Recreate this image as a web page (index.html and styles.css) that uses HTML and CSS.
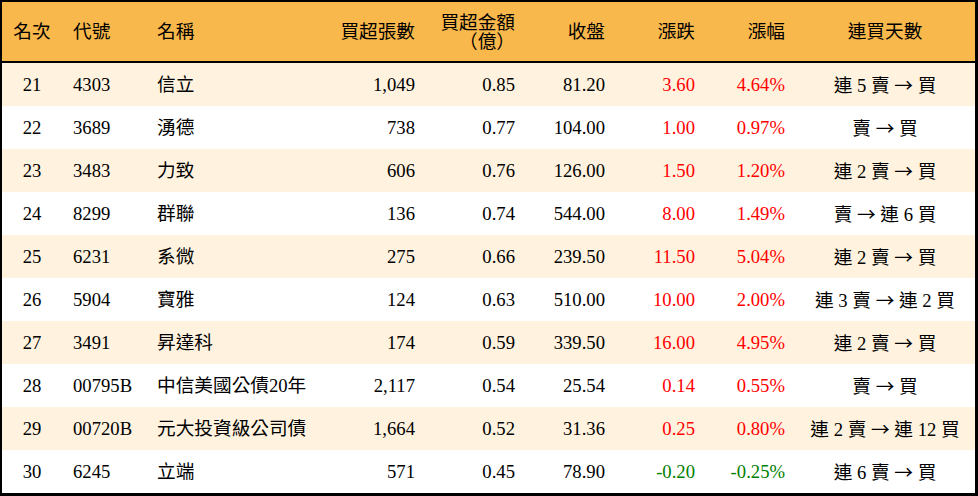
FILE: index.html
```html
<!DOCTYPE html>
<html lang="zh-Hant">
<head>
<meta charset="utf-8">
<title>買超排行</title>
<link rel="stylesheet" href="styles.css">
</head>
<body>
<table class="rank">
  <colgroup>
    <col class="c-rank"><col class="c-code"><col class="c-name"><col class="c-vol"><col class="c-amt"><col class="c-close"><col class="c-chg"><col class="c-pct"><col class="c-days">
  </colgroup>
  <thead>
    <tr>
      <th class="ctr">名次</th>
      <th class="lft code">代號</th>
      <th class="lft">名稱</th>
      <th class="rgt">買超張數</th>
      <th class="rgt two"><span class="ln">買超金額</span><span class="ln">（億）</span></th>
      <th class="rgt">收盤</th>
      <th class="rgt">漲跌</th>
      <th class="rgt">漲幅</th>
      <th class="ctr">連買天數</th>
    </tr>
  </thead>
  <tbody>
    <tr class="alt"><td class="ctr">21</td><td class="lft code">4303</td><td class="lft">信立</td><td class="rgt">1,049</td><td class="rgt">0.85</td><td class="rgt">81.20</td><td class="rgt up">3.60</td><td class="rgt up">4.64%</td><td class="ctr">連 5 賣 <span class="arr">→</span> 買</td></tr>
    <tr><td class="ctr">22</td><td class="lft code">3689</td><td class="lft">湧德</td><td class="rgt">738</td><td class="rgt">0.77</td><td class="rgt">104.00</td><td class="rgt up">1.00</td><td class="rgt up">0.97%</td><td class="ctr">賣 <span class="arr">→</span> 買</td></tr>
    <tr class="alt"><td class="ctr">23</td><td class="lft code">3483</td><td class="lft">力致</td><td class="rgt">606</td><td class="rgt">0.76</td><td class="rgt">126.00</td><td class="rgt up">1.50</td><td class="rgt up">1.20%</td><td class="ctr">連 2 賣 <span class="arr">→</span> 買</td></tr>
    <tr><td class="ctr">24</td><td class="lft code">8299</td><td class="lft">群聯</td><td class="rgt">136</td><td class="rgt">0.74</td><td class="rgt">544.00</td><td class="rgt up">8.00</td><td class="rgt up">1.49%</td><td class="ctr">賣 <span class="arr">→</span> 連 6 買</td></tr>
    <tr class="alt"><td class="ctr">25</td><td class="lft code">6231</td><td class="lft">系微</td><td class="rgt">275</td><td class="rgt">0.66</td><td class="rgt">239.50</td><td class="rgt up">11.50</td><td class="rgt up">5.04%</td><td class="ctr">連 2 賣 <span class="arr">→</span> 買</td></tr>
    <tr><td class="ctr">26</td><td class="lft code">5904</td><td class="lft">寶雅</td><td class="rgt">124</td><td class="rgt">0.63</td><td class="rgt">510.00</td><td class="rgt up">10.00</td><td class="rgt up">2.00%</td><td class="ctr">連 3 賣 <span class="arr">→</span> 連 2 買</td></tr>
    <tr class="alt"><td class="ctr">27</td><td class="lft code">3491</td><td class="lft">昇達科</td><td class="rgt">174</td><td class="rgt">0.59</td><td class="rgt">339.50</td><td class="rgt up">16.00</td><td class="rgt up">4.95%</td><td class="ctr">連 2 賣 <span class="arr">→</span> 買</td></tr>
    <tr><td class="ctr">28</td><td class="lft code">00795B</td><td class="lft">中信美國公債20年</td><td class="rgt">2,117</td><td class="rgt">0.54</td><td class="rgt">25.54</td><td class="rgt up">0.14</td><td class="rgt up">0.55%</td><td class="ctr">賣 <span class="arr">→</span> 買</td></tr>
    <tr class="alt"><td class="ctr">29</td><td class="lft code">00720B</td><td class="lft">元大投資級公司債</td><td class="rgt">1,664</td><td class="rgt">0.52</td><td class="rgt">31.36</td><td class="rgt up">0.25</td><td class="rgt up">0.80%</td><td class="ctr">連 2 賣 <span class="arr">→</span> 連 12 買</td></tr>
    <tr><td class="ctr">30</td><td class="lft code">6245</td><td class="lft">立端</td><td class="rgt">571</td><td class="rgt">0.45</td><td class="rgt">78.90</td><td class="rgt down">-0.20</td><td class="rgt down">-0.25%</td><td class="ctr">連 6 賣 <span class="arr">→</span> 買</td></tr>
  </tbody>
</table>
</body>
</html>
```
FILE: styles.css
```css
html, body {
  margin: 0;
  padding: 0;
  background: #ffffff;
}

.rank {
  width: 978px;
  height: 496px;
  border-collapse: separate;
  border-spacing: 0;
  table-layout: fixed;
  border-style: solid;
  border-color: #000;
  border-width: 2px 3px 3px 2px;
  box-sizing: border-box;
  font-family: "Liberation Serif", "Noto Sans CJK TC", serif;
  font-size: 18.67px;
  color: #000;
}

.c-rank { width: 60px; }
.c-code { width: 85px; }
.c-name { width: 178px; }
.c-vol { width: 100px; }
.c-amt { width: 100px; }
.c-close { width: 90px; }
.c-chg { width: 90px; }
.c-pct { width: 90px; }
.c-days { width: 180px; }

thead th {
  background: #f9b84b;
  height: 59px;
  padding: 0 10px;
  font-weight: normal;
  border-bottom: 2px solid #000;
  line-height: 20px;
  white-space: nowrap;
}

.two .ln {
  display: block;
  line-height: 19px;
}

tbody td {
  height: 43px;
  padding: 0 10px;
  line-height: 20px;
  white-space: nowrap;
}

tbody tr.alt td {
  background: #fff3df;
}

.ctr { text-align: center; }
.lft { text-align: left; }
.rgt { text-align: right; }
.code { padding-left: 11px; }

.arr {
  font-family: "Noto Sans CJK TC", sans-serif;
}

.up { color: #ff0000; }
.down { color: #008000; }
```
